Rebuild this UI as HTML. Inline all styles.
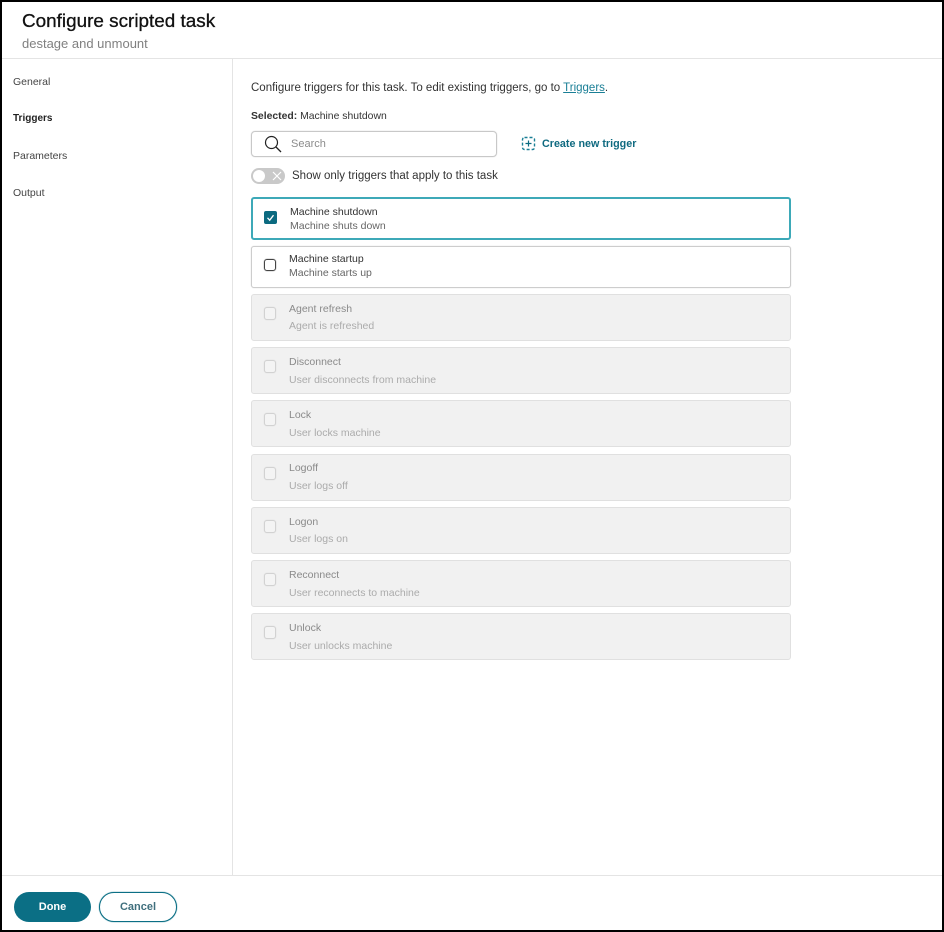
<!DOCTYPE html>
<html><head><meta charset="utf-8">
<style>
html,body{margin:0;padding:0;background:#fff}
body{width:944px;height:932px;position:relative;overflow:hidden;font-family:"Liberation Sans",sans-serif;color:#333}
.a{position:absolute;white-space:nowrap}
.t{position:absolute;white-space:nowrap;font-size:10.5px;line-height:14px;filter:blur(.25px)}
.card{position:absolute;left:251px;width:540px;box-sizing:border-box;border-radius:3px;background:#f1f1f1;border:1px solid #e0e0e0;height:47px}
.cb{position:absolute;left:264px;width:12px;height:13px;box-sizing:border-box;border:1px solid #d2d2d2;border-radius:3px;background:#f4f4f4;box-shadow:0 0 1px #d2d2d2}
.d1{color:#8a8a8a}.d2{color:#ababab}
</style></head><body>
<div class="a" style="left:0;top:0;width:944px;height:2px;background:#000"></div>
<div class="a" style="left:0;top:930px;width:944px;height:2px;background:#000"></div>
<div class="a" style="left:0;top:0;width:2px;height:932px;background:#000"></div>
<div class="a" style="left:942px;top:0;width:2px;height:932px;background:#000"></div>
<div class="a" style="left:2px;top:58px;width:940px;height:1px;background:#e4e4e4"></div>
<div class="a" style="left:232px;top:59px;width:1px;height:817px;background:#e4e4e4"></div>
<div class="a" style="left:2px;top:875px;width:940px;height:1px;background:#e4e4e4"></div>

<div class="a" style="left:22px;top:11px;font-size:18.9px;line-height:22px;font-weight:400;color:#111;-webkit-text-stroke:.3px #111">Configure scripted task</div>
<div class="a" style="left:22px;top:36px;font-size:13px;line-height:15px;color:#808080;filter:blur(.25px)">destage and unmount</div>

<div class="t" style="left:13px;top:75px;color:#444">General</div>
<div class="t" style="left:13px;top:112px;color:#222;font-weight:700;font-size:10px">Triggers</div>
<div class="t" style="left:13px;top:149px;color:#444">Parameters</div>
<div class="t" style="left:13px;top:186px;color:#444">Output</div>

<div class="a" style="left:251px;top:81px;font-size:11.5px;line-height:14px;color:#333;filter:blur(.25px)">Configure triggers for this task. To edit existing triggers, go to <span style="color:#1a7f96;text-decoration:underline">Triggers</span>.</div>
<div class="t" style="left:251px;top:110px;color:#333;font-size:10.4px"><b>Selected:</b> Machine shutdown</div>

<div class="a" style="left:251px;top:131px;width:246px;height:26px;box-sizing:border-box;border:1px solid #c8c8c8;border-radius:4px;box-shadow:0 0 1px #c8c8c8"></div>
<svg class="a" style="left:262px;top:134px" width="22" height="20" viewBox="0 0 22 20"><circle cx="9.5" cy="8.5" r="6" fill="none" stroke="#222" stroke-width="1.2"/><path d="M14 13l5 5" stroke="#222" stroke-width="1.3" fill="none"/></svg>
<div class="a" style="left:291px;top:137px;font-size:11px;line-height:14px;color:#8c8c8c">Search</div>

<svg class="a" style="left:521px;top:136px" width="15" height="15" viewBox="0 0 15 15"><rect x="1.5" y="1.5" width="12" height="12" rx="2" fill="none" stroke="#1a7f96" stroke-width="1.4" stroke-dasharray="3 2"/><path d="M7.5 4.5v6M4.5 7.5h6" stroke="#0b6a80" stroke-width="1.2"/></svg>
<div class="a" style="left:542px;top:137px;font-size:10.75px;line-height:14px;font-weight:700;color:#0f6a80">Create new trigger</div>

<div class="a" style="left:251px;top:168px;width:34px;height:16px;border-radius:8px;background:#c9c9c9"></div>
<div class="a" style="left:253px;top:170px;width:12px;height:12px;border-radius:50%;background:#fff"></div>
<svg class="a" style="left:272px;top:171px" width="10" height="10" viewBox="0 0 10 10"><path d="M1 1l8 8M9 1l-8 8" stroke="#fff" stroke-width="1.2"/></svg>
<div class="a" style="left:292px;top:169px;font-size:11.5px;line-height:14px;color:#333;filter:blur(.25px)">Show only triggers that apply to this task</div>

<div class="card" style="top:197px;height:43px;background:#fff;border:2px solid #3da9b8"></div>
<div class="a" style="left:264px;top:211px;width:13px;height:13px;border-radius:2px;background:#0b6a80"></div>
<svg class="a" style="left:264px;top:211px" width="13" height="13" viewBox="0 0 13 13"><path d="M3.5 6.8l2.2 2.4 3.8-5" stroke="#fff" stroke-width="1.3" fill="none"/></svg>
<div class="t" style="left:290px;top:205px;color:#333">Machine shutdown</div>
<div class="t" style="left:290px;top:219px;color:#666">Machine shuts down</div>

<div class="card" style="top:246px;height:42px;background:#fff;border:1px solid #cdcdcd;box-shadow:0 0 1px #cdcdcd"></div>
<div class="a" style="left:264px;top:259px;width:12px;height:12px;box-sizing:border-box;border:1px solid #444;border-radius:3px;box-shadow:0 0 1px #555"></div>
<div class="t" style="left:289px;top:252px;color:#333">Machine startup</div>
<div class="t" style="left:289px;top:266px;color:#666">Machine starts up</div>

<div class="card" style="top:294px"></div><div class="cb" style="top:307px"></div>
<div class="t d1" style="left:289px;top:302px">Agent refresh</div><div class="t d2" style="left:289px;top:319px">Agent is refreshed</div>

<div class="card" style="top:347px"></div><div class="cb" style="top:360px"></div>
<div class="t d1" style="left:289px;top:355px">Disconnect</div><div class="t d2" style="left:289px;top:373px">User disconnects from machine</div>

<div class="card" style="top:400px"></div><div class="cb" style="top:413px"></div>
<div class="t d1" style="left:289px;top:408px">Lock</div><div class="t d2" style="left:289px;top:426px">User locks machine</div>

<div class="card" style="top:454px"></div><div class="cb" style="top:467px"></div>
<div class="t d1" style="left:289px;top:461px">Logoff</div><div class="t d2" style="left:289px;top:479px">User logs off</div>

<div class="card" style="top:507px"></div><div class="cb" style="top:520px"></div>
<div class="t d1" style="left:289px;top:515px">Logon</div><div class="t d2" style="left:289px;top:532px">User logs on</div>

<div class="card" style="top:560px"></div><div class="cb" style="top:573px"></div>
<div class="t d1" style="left:289px;top:568px">Reconnect</div><div class="t d2" style="left:289px;top:586px">User reconnects to machine</div>

<div class="card" style="top:613px"></div><div class="cb" style="top:626px"></div>
<div class="t d1" style="left:289px;top:621px">Unlock</div><div class="t d2" style="left:289px;top:639px">User unlocks machine</div>

<div class="a" style="left:14px;top:892px;width:77px;height:30px;border-radius:15px;background:#0b6f85;color:#fff;font-size:11px;font-weight:700;line-height:31px;text-align:center">Done</div>
<div class="a" style="left:99px;top:892px;width:78px;height:30px;box-sizing:border-box;border-radius:15px;border:1px solid #0b6f85;box-shadow:0 0 1px #0b6f85;background:#fff;color:#3f6f7d;font-size:11px;font-weight:700;line-height:29px;text-align:center">Cancel</div>
</body></html>
